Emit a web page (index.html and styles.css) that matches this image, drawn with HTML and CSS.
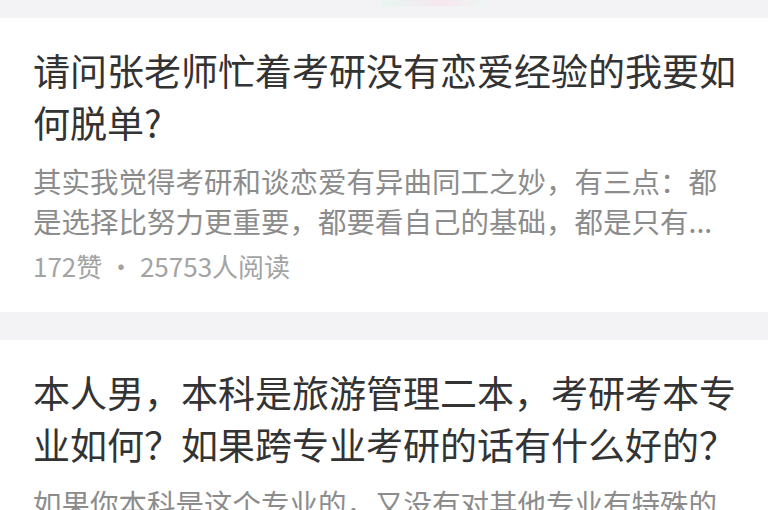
FILE: index.html
```html
<!DOCTYPE html>
<html lang="zh-CN">
<head>
<meta charset="utf-8">
<title>问答列表</title>
<link rel="stylesheet" href="styles.css">
</head>
<body>
<div class="topbar"><span class="top-tab"></span></div>
<div class="feed">
  <article class="card">
    <h2 class="title">请问张老师忙着考研没有恋爱经验的我要如何脱单?</h2>
    <p class="excerpt">其实我觉得考研和谈恋爱有异曲同工之妙，有三点：都是选择比努力更重要，都要看自己的基础，都是只有...</p>
    <div class="meta">172赞 · 25753人阅读</div>
  </article>
  <article class="card">
    <h2 class="title">本人男，本科是旅游管理二本，考研考本专业如何？如果跨专业考研的话有什么好的？</h2>
    <p class="excerpt">如果你本科是这个专业的，又没有对其他专业有特殊的兴趣，那么考本专业会是比较稳妥的选择...</p>
    <div class="meta">96赞 · 18342人阅读</div>
  </article>
</div>
</body>
</html>
```
FILE: styles.css
```css
html, body {
  margin: 0;
  padding: 0;
}
body {
  background: #f3f3f5;
  font-family: "Noto Sans CJK SC", "Noto Sans", sans-serif;
  width: 768px;
  overflow: hidden;
}
.topbar {
  height: 18px;
  display: flex;
  justify-content: center;
  align-items: flex-start;
}
.top-tab {
  display: block;
  width: 104px;
  height: 6px;
  margin-left: 98px;
  border-radius: 0 0 3px 3px;
  background: linear-gradient(90deg, #e6f6f1 0%, #f7e6ee 60%, #eef6f3 100%);
}
.feed {
  display: flex;
  flex-direction: column;
  gap: 28px;
}
.card {
  background: #fff;
  padding: 26px 30px 28px 33px;
}
.title {
  margin: 0;
  font-size: 37px;
  line-height: 52px;
  font-weight: 400;
  color: #333;
}
.excerpt {
  margin: 13px 0 0;
  font-size: 28.5px;
  line-height: 40px;
  color: #8c8c8c;
}
.meta {
  margin-top: 7px;
  font-size: 26px;
  line-height: 36px;
  color: #a3a3a3;
}
```
